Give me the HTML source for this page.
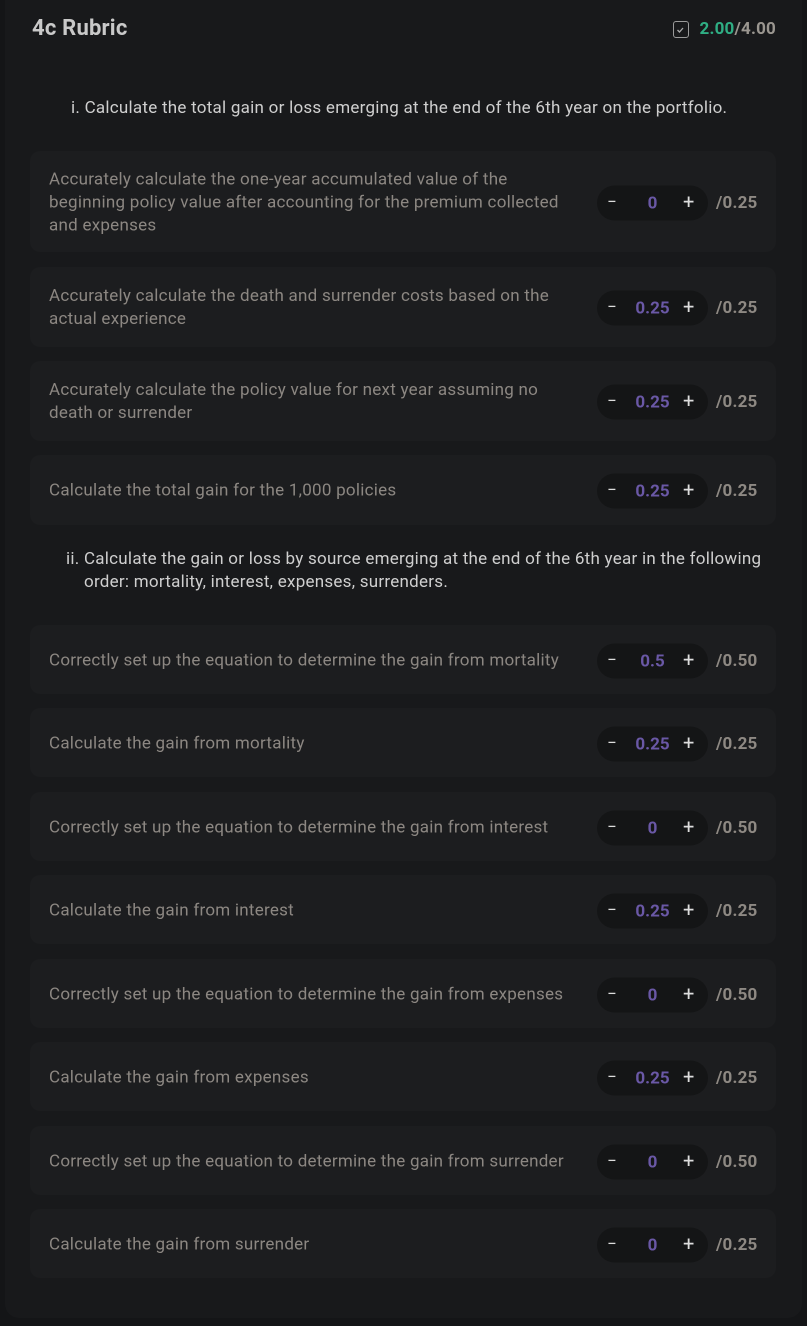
<!DOCTYPE html>
<html><head><style>
*{margin:0;padding:0;box-sizing:border-box}
body{width:807px;height:1326px;background:#141517;font-family:"Roboto","Liberation Sans",sans-serif;position:relative;overflow:hidden}
.panel{position:absolute;left:5px;top:0;width:797px;height:1318px;background:#18191b;border-radius:0 0 14px 14px}
.title{position:absolute;left:32px;top:16px;font-size:22px;font-weight:bold;color:#c9c9c9;letter-spacing:0.2px}
.score{position:absolute;right:31px;top:19px;font-size:17px;font-weight:bold;color:#9a9690;display:flex;align-items:center;letter-spacing:0.2px}
.score .g{color:#2fae84}
.chk{width:16px;height:17px;border:1.5px solid #9a9a9a;border-radius:3px;margin-right:11px;position:relative}
.h{position:absolute;font-size:17px;color:#cfcfcf;line-height:23px;letter-spacing:0.25px}
.row{position:absolute;left:30px;width:746px;background:#1c1d1f;border-radius:10px}
.t{position:absolute;left:19px;top:calc(50% + 1px);transform:translateY(-50%);width:530px;font-size:17px;line-height:23px;color:#8c8782;letter-spacing:0.25px}
.pill{position:absolute;left:567px;top:calc(50% + 1px);transform:translateY(-50%);width:111px;height:35px;border-radius:18px;background:#141516;font-size:17px;color:#ddd}
.pill .m{position:absolute;left:10px;top:7px}
.pill .p{position:absolute;left:86px;top:4px;font-size:20px}
.pill .v{position:absolute;left:0;width:111px;text-align:center;top:8px;color:#6a58a6;font-weight:bold}
.max{position:absolute;left:686px;top:calc(50% + 1px);transform:translateY(-50%);font-size:17px;font-weight:bold;color:#8e8983;letter-spacing:0.2px}
</style></head><body>
<div class="panel"></div>
<div class="title">4c Rubric</div>
<div class="score"><div class="chk"><svg width="13" height="13" style="position:absolute;left:0;top:1px"><path d="M3.5 7l2 2 3.5-4" stroke="#aaa" stroke-width="1.3" fill="none"/></svg></div><span class="g">2.00</span>/4.00</div>
<div class="h" style="left:71px;top:97px">i. Calculate the total gain or loss emerging at the end of the 6th year on the portfolio.</div>

<div class="row" style="top:151px;height:101px"><div class="t">Accurately calculate the one-year accumulated value of the beginning policy value after accounting for the premium collected and expenses</div><div class="pill"><span class="m">−</span><span class="v">0</span><span class="p">+</span></div><div class="max">/0.25</div></div>
<div class="row" style="top:267px;height:80px"><div class="t">Accurately calculate the death and surrender costs based on the actual experience</div><div class="pill"><span class="m">−</span><span class="v">0.25</span><span class="p">+</span></div><div class="max">/0.25</div></div>
<div class="row" style="top:361px;height:80px"><div class="t">Accurately calculate the policy value for next year assuming no death or surrender</div><div class="pill"><span class="m">−</span><span class="v">0.25</span><span class="p">+</span></div><div class="max">/0.25</div></div>
<div class="row" style="top:455px;height:70px"><div class="t">Calculate the total gain for the 1,000 policies</div><div class="pill"><span class="m">−</span><span class="v">0.25</span><span class="p">+</span></div><div class="max">/0.25</div></div>

<div class="h" style="left:66px;top:548px;width:712px;padding-left:18px;text-indent:-18px">ii. Calculate the gain or loss by source emerging at the end of the 6th year in the following order: mortality, interest, expenses, surrenders.</div>

<div class="row" style="top:625px;height:69px"><div class="t">Correctly set up the equation to determine the gain from mortality</div><div class="pill"><span class="m">−</span><span class="v">0.5</span><span class="p">+</span></div><div class="max">/0.50</div></div>
<div class="row" style="top:708px;height:69px"><div class="t">Calculate the gain from mortality</div><div class="pill"><span class="m">−</span><span class="v">0.25</span><span class="p">+</span></div><div class="max">/0.25</div></div>
<div class="row" style="top:792px;height:69px"><div class="t">Correctly set up the equation to determine the gain from interest</div><div class="pill"><span class="m">−</span><span class="v">0</span><span class="p">+</span></div><div class="max">/0.50</div></div>
<div class="row" style="top:875px;height:69px"><div class="t">Calculate the gain from interest</div><div class="pill"><span class="m">−</span><span class="v">0.25</span><span class="p">+</span></div><div class="max">/0.25</div></div>
<div class="row" style="top:959px;height:69px"><div class="t">Correctly set up the equation to determine the gain from expenses</div><div class="pill"><span class="m">−</span><span class="v">0</span><span class="p">+</span></div><div class="max">/0.50</div></div>
<div class="row" style="top:1042px;height:69px"><div class="t">Calculate the gain from expenses</div><div class="pill"><span class="m">−</span><span class="v">0.25</span><span class="p">+</span></div><div class="max">/0.25</div></div>
<div class="row" style="top:1126px;height:69px"><div class="t">Correctly set up the equation to determine the gain from surrender</div><div class="pill"><span class="m">−</span><span class="v">0</span><span class="p">+</span></div><div class="max">/0.50</div></div>
<div class="row" style="top:1209px;height:69px"><div class="t">Calculate the gain from surrender</div><div class="pill"><span class="m">−</span><span class="v">0</span><span class="p">+</span></div><div class="max">/0.25</div></div>
</body></html>
